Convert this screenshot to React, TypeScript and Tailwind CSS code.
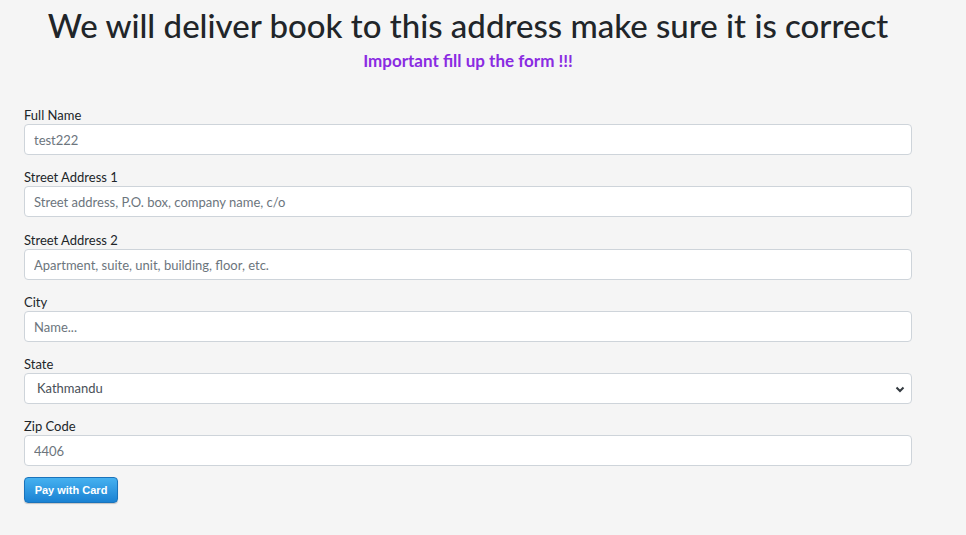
const font = { fontFamily: 'Lato, "Noto Sans", sans-serif' };

function Field({ label, children }: { label: string; children: React.ReactNode }) {
  return (
    <div className="flex flex-col">
      <label className="text-[13px] leading-[18px] text-[#212529]">{label}</label>
      {children}
    </div>
  );
}

const inputCls =
  "h-[31px] w-full rounded-[4px] border border-[#ced4da] bg-white px-[9px] text-[13px] text-[#6c757d] placeholder:text-[#6c757d] outline-none";

export default function App() {
  return (
    <div className="min-h-[535px] w-full bg-[#f5f5f5]" style={font}>
      <div className="w-[936px] px-6 pt-[5px]">
        <h1 className="text-center text-[33px] font-medium leading-[40px] text-[#212529]">
          We will deliver book to this address make sure it is correct
        </h1>
        <p className="mt-[6px] text-center text-[17px] font-bold leading-5 text-[#8a2be2]">
          Important fill up the form !!!
        </p>
        <form className="mt-[35px] flex flex-col">
          <Field label="Full Name">
            <input className={inputCls} defaultValue="test222" />
          </Field>
          <div className="mt-[13px]">
            <Field label="Street Address 1">
              <input className={inputCls} placeholder="Street address, P.O. box, company name, c/o" />
            </Field>
          </div>
          <div className="mt-[14px]">
            <Field label="Street Address 2">
              <input className={inputCls} placeholder="Apartment, suite, unit, building, floor, etc." />
            </Field>
          </div>
          <div className="mt-[13px]">
            <Field label="City">
              <input className={inputCls} placeholder="Name..." />
            </Field>
          </div>
          <div className="mt-[13px]">
            <Field label="State">
              <div className="relative">
                <select className={inputCls + " appearance-none pl-[12px] text-[#495057]"} defaultValue="Kathmandu">
                  <option>Kathmandu</option>
                </select>
                <svg
                  className="pointer-events-none absolute right-[6px] top-[10px]"
                  width="12"
                  height="12"
                  viewBox="0 0 12 12"
                  fill="none"
                  stroke="#343a40"
                  strokeWidth="2"
                >
                  <path d="M2.5 4.5 6 8l3.5-3.5" />
                </svg>
              </div>
            </Field>
          </div>
          <div className="mt-[13px]">
            <Field label="Zip Code">
              <input className={inputCls} defaultValue="4406" />
            </Field>
          </div>
          <div className="mt-[10px]">
            <button
              type="button"
              className="h-[26px] w-[94px] rounded-[4px] border border-[#1a73bb] bg-gradient-to-b from-[#45b1f0] to-[#1a82d3] text-[11px] font-bold text-white shadow-[0_1px_1px_rgba(0,0,0,0.2)]"
              style={{ fontFamily: '"Liberation Sans", Arial, sans-serif' }}
            >
              Pay with Card
            </button>
          </div>
        </form>
      </div>
    </div>
  );
}
